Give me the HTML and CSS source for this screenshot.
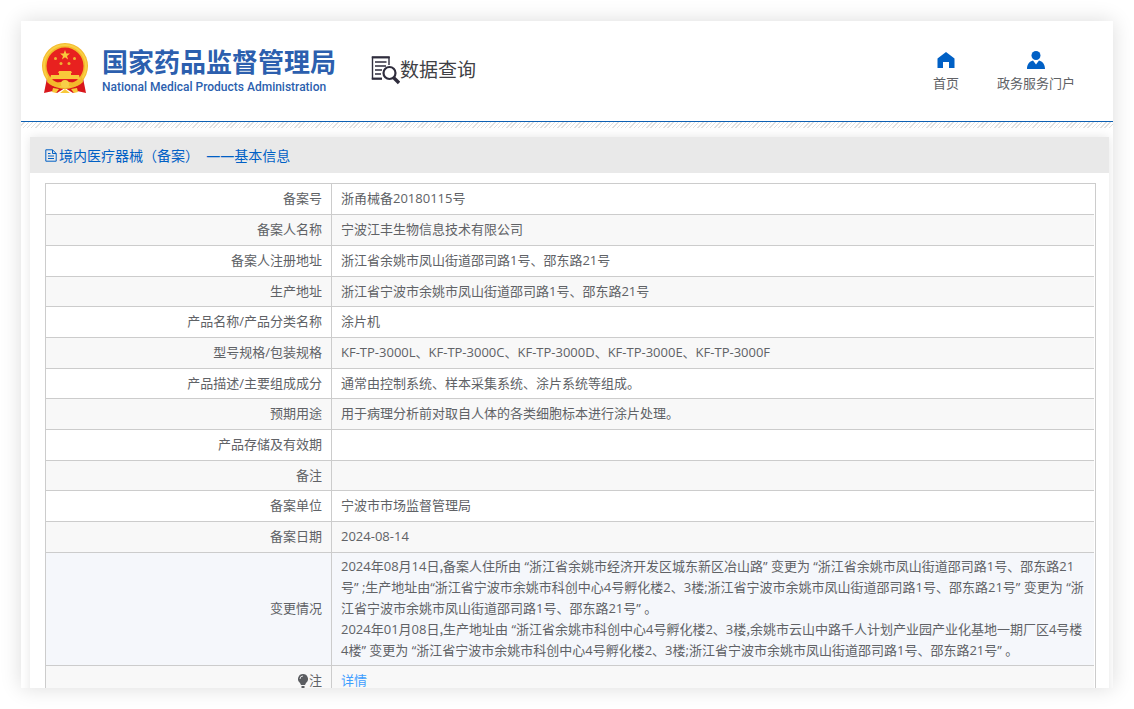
FILE: index.html
```html
<!DOCTYPE html>
<html lang="zh-CN">
<head>
    <meta charset="UTF-8">
    <meta name="viewport" content="width=device-width, initial-scale=1.0">
    <title>数据查询 - 国家药品监督管理局</title>
    <link rel="stylesheet" href="styles.css">
</head>
<body>
    <div class="page">
        <header class="header">
            <svg class="emblem" viewBox="0 0 48 52">
                <path d="M6 35 L3 50 L12 48 L16 50 L24 45 L32 50 L36 48 L45 50 L42 35 Z" fill="#d8161b"/>
                <circle cx="24" cy="23" r="23" fill="#f3b92b"/>
                <circle cx="24" cy="23" r="21" fill="none" stroke="#f9cf45" stroke-width="2"/>
                <circle cx="24" cy="23" r="18.500" fill="#e8211f"/>
                <path d="M24 7 L25.3 10.6 L29 10.6 L26 12.9 L27.1 16.5 L24 14.3 L20.9 16.5 L22 12.9 L19 10.6 L22.7 10.6 Z" fill="#f8c93c"/>
                <g fill="#f0b333">
                    <circle cx="14.500" cy="15.500" r="1.500"/>
                    <circle cx="33.500" cy="15.500" r="1.500"/>
                    <circle cx="20" cy="20.500" r="1.500"/>
                    <circle cx="28" cy="20.500" r="1.500"/>
                </g>
                <path d="M18 28 H30 L31 30 H30 V32 H38 L39 36 H9 L10 32 H18 V30 H17 Z" fill="#f9c83a"/>
                <path d="M7 33 C10 41 17 40 24 38 C31 40 38 41 41 33 L42 39 C37 44 31 45 28 43 L24 46 L20 43 C17 45 11 44 6 39 Z" fill="#f3b92b"/>
                <path d="M12 37 H36 L31 39 H17 Z" fill="#d8161b"/>
                <circle cx="24" cy="41" r="4" fill="#f8cf48"/>
                <path d="M12 45 L18 46 L15 50 L11 49 Z M36 45 L30 46 L33 50 L37 49 Z M19 50 L24 46 L29 50 Z" fill="#f8c93c"/>
            </svg>
            <div class="brand">
                <div class="brand-name">国家药品监督管理局</div>
                <div class="brand-en">National Medical Products Administration</div>
            </div>
            <div class="search-title">
                <svg class="search-icon" viewBox="0 0 29 29">
                    <path d="M18 9 V1.5 H1.5 V22.5 H11" fill="none" stroke="#2f2d3d" stroke-width="1.4"/>
                    <path d="M0.8 1.3 H18.7 M0.8 22.7 H11" stroke="#2f2d3d" stroke-width="2"/>
                    <path d="M4 6 H15.500 M4 10 H15 M4 14 H11 M4 18 H10" stroke="#2f2d3d" stroke-width="1.3"/>
                    <circle cx="18.500" cy="17" r="6" fill="#fff" stroke="#2f2d3d" stroke-width="2.2"/>
                    <path d="M22.500 21.500 L28 27" stroke="#2f2d3d" stroke-width="3.4"/>
                </svg>
                <span>数据查询</span>
            </div>
            <nav class="nav">
                <a class="nav-link" href="#">
                    <svg class="nav-icon" viewBox="0 0 18 18">
                        <path d="M9 1 L17.500 7.500 V17 H12 V11 H6 V17 H0.500 V7.500 Z" fill="#0060c5"/>
                    </svg>
                    <span>首页</span>
                </a>
                <a class="nav-link" href="#">
                    <svg class="nav-icon" viewBox="0 0 18 18">
                        <circle cx="9" cy="4.500" r="4.500" fill="#0060c5"/>
                        <path d="M0 18 C0 13 2.500 10.500 6 9.500 L9 13.500 L12 9.500 C15.500 10.500 18 13 18 18 Z" fill="#0060c5"/>
                    </svg>
                    <span>政务服务门户</span>
                </a>
            </nav>
        </header>
        <div class="hatch"></div>

        <main class="card">
            <h1 class="card-title">
                <svg class="file-icon" viewBox="0 0 12 13">
                    <path d="M0.800 0.800 H7.500 L11.200 4.500 V12.200 H0.800 Z M7.500 0.800 V4.500 H11.200 M3 4.500 H5.500 M3 7 H9 M3 9.500 H9" fill="none" stroke="#0060c5"/>
                </svg>
                <span>境内医疗器械（备案）&nbsp; ——基本信息</span>
            </h1>
            <div class="table-box">
                <table class="info">
                    <tbody>
                        <tr><th scope="row">备案号</th><td>浙甬械备20180115号</td></tr>
                        <tr><th scope="row">备案人名称</th><td>宁波江丰生物信息技术有限公司</td></tr>
                        <tr><th scope="row">备案人注册地址</th><td>浙江省余姚市凤山街道邵司路1号、邵东路21号</td></tr>
                        <tr><th scope="row">生产地址</th><td>浙江省宁波市余姚市凤山街道邵司路1号、邵东路21号</td></tr>
                        <tr><th scope="row">产品名称/产品分类名称</th><td>涂片机</td></tr>
                        <tr><th scope="row">型号规格/包装规格</th><td>KF-TP-3000L、KF-TP-3000C、KF-TP-3000D、KF-TP-3000E、KF-TP-3000F</td></tr>
                        <tr><th scope="row">产品描述/主要组成成分</th><td>通常由控制系统、样本采集系统、涂片系统等组成。</td></tr>
                        <tr><th scope="row">预期用途</th><td>用于病理分析前对取自人体的各类细胞标本进行涂片处理。</td></tr>
                        <tr><th scope="row">产品存储及有效期</th><td></td></tr>
                        <tr><th scope="row">备注</th><td></td></tr>
                        <tr><th scope="row">备案单位</th><td>宁波市市场监督管理局</td></tr>
                        <tr><th scope="row">备案日期</th><td>2024-08-14</td></tr>
                        <tr class="active">
                            <th scope="row">变更情况</th>
                            <td>2024年08月14日，备案人住所由 “浙江省余姚市经济开发区城东新区冶山路” 变更为 “浙江省余姚市凤山街道邵司路1号、邵东路21<br>号” ;生产地址由“浙江省宁波市余姚市科创中心4号孵化楼2、3楼;浙江省宁波市余姚市凤山街道邵司路1号、邵东路21号” 变更为 “浙<br>江省宁波市余姚市凤山街道邵司路1号、邵东路21号” 。<br>2024年01月08日，生产地址由 “浙江省余姚市科创中心4号孵化楼2、3楼，余姚市云山中路千人计划产业园产业化基地一期厂区4号楼<br>4楼” 变更为 “浙江省宁波市余姚市科创中心4号孵化楼2、3楼;浙江省宁波市余姚市凤山街道邵司路1号、邵东路21号” 。</td>
                        </tr>
                        <tr>
                            <th scope="row"><svg class="bulb" viewBox="0 0 10 14"><path d="M5 0 A5 5 0 0 1 8 9 L7 11 H3 L2 9 A5 5 0 0 1 5 0 Z M3.500 12 H6.500 V14 H3.500 Z" fill="#5b5d61"/><path d="M2 5 A3 3 0 0 1 5 2" fill="none" stroke="#fff" stroke-width="0.8"/></svg>注</th>
                            <td><a class="detail" href="#">详情</a></td>
                        </tr>
                    </tbody>
                </table>
            </div>
        </main>
    </div>
</body>
</html>
```
FILE: styles.css
```css
* {
    box-sizing: border-box;
}
body {
    margin: 0;
    padding: 21px;
    background: #fff;
    color: #606266;
    font-family: "Open Sans", "Noto Sans CJK SC", sans-serif;
    font-size: 13px;
    line-height: 21px;
}
a {
    color: inherit;
    text-decoration: none;
}
.page {
    height: calc(100vh - 42px);
    overflow: hidden;
    background: #fff;
    box-shadow: 0 0 20px rgba(0, 0, 0, 0.14);
}

/* header */
.header {
    display: flex;
    align-items: center;
    height: 101px;
    padding: 0 38px 4px 20px;
    border-bottom: 1px solid #0d60b3;
}
.emblem {
    width: 48px;
    height: 52px;
}
.brand {
    margin-left: 13px;
    padding-top: 6px;
    color: #2c5fae;
    white-space: nowrap;
}
.brand-name {
    font-size: 26px;
    font-weight: 700;
    line-height: 30px;
}
.brand-en {
    font-family: Roboto, sans-serif;
    font-size: 12px;
    font-weight: 500;
    line-height: 20px;
}
.search-title {
    display: flex;
    align-items: center;
    margin-left: 35px;
    padding-top: 2px;
    color: #3f3f45;
    font-size: 19px;
    white-space: nowrap;
}
.search-icon {
    width: 29px;
    height: 29px;
}
.nav {
    display: flex;
    gap: 38px;
    margin-left: auto;
    padding-top: 6px;
}
.nav-link {
    display: flex;
    flex-direction: column;
    align-items: center;
    gap: 4px;
}
.nav-icon {
    width: 18px;
    height: 18px;
}
.hatch {
    height: 6px;
    background: repeating-linear-gradient(135deg, #fff 0, #fff 2px, #e0e0e0 2px, #e0e0e0 3px);
}

/* record card */
.card {
    margin: 9px 4px 0 9px;
    padding-bottom: 20px;
    background: #fff;
    box-shadow: 0 0 10px rgba(0, 0, 0, 0.1);
}
.card-title {
    display: flex;
    align-items: center;
    height: 36px;
    margin: 0;
    padding: 0 15px;
    background: #e9e9e9;
    color: #0060c5;
    font-size: 14px;
    font-weight: 400;
}
.file-icon {
    width: 12px;
    height: 13px;
    margin-right: 2px;
}
.table-box {
    margin: 10px 13px 0 15px;
    padding-right: 1px;
    border: 1px solid #ccc;
}
.info {
    width: 100%;
    border-spacing: 0;
    table-layout: fixed;
    font-variant-east-asian: proportional-width;
}
.info th,
.info td {
    height: 31px;
    padding: 3px 9px 4px;
    border-bottom: 1px solid #ccc;
    font-weight: 400;
}
.info tr:nth-child(3n+4) > * {
    height: 30px;
}
.info th {
    width: 286px;
    border-right: 1px solid #ccc;
    text-align: right;
}
.info td {
    padding-right: 5px;
    text-align: left;
}
.info tr:nth-child(even) {
    background: #f8f8f8;
}
.info .active {
    background: #f5f7fb;
}
.bulb {
    width: 10px;
    height: 14px;
    margin-right: 1px;
    vertical-align: -3px;
}
.detail {
    color: #409eff;
}
```
